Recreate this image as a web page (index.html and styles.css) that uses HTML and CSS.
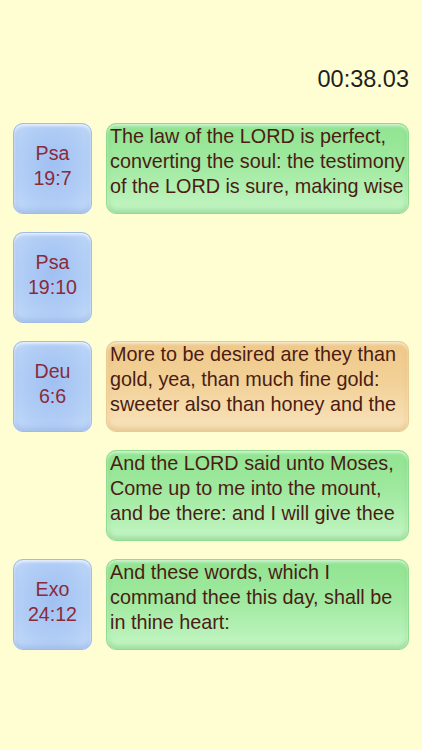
FILE: index.html
```html
<!DOCTYPE html>
<html lang="en">
<head>
    <meta charset="UTF-8">
    <meta name="viewport" content="width=device-width, initial-scale=1.0">
    <title>Memory Verses</title>
    <link rel="stylesheet" href="styles.css">
</head>
<body>
    <div class="casovac">00:38.03</div>
    <div class="seznam">
        <div class="radek">
            <div class="odkaz">Psa<br>19:7</div>
            <div class="vers zeleny">The law of the LORD is perfect, converting the soul: the testimony of the LORD is sure, making wise</div>
        </div>
        <div class="radek">
            <div class="odkaz">Psa<br>19:10</div>
        </div>
        <div class="radek">
            <div class="odkaz">Deu<br>6:6</div>
            <div class="vers oranzovy">More to be desired are they than gold, yea, than much fine gold: sweeter also than honey and the</div>
        </div>
        <div class="radek">
            <div class="odkaz prazdny"></div>
            <div class="vers zeleny">And the LORD said unto Moses, Come up to me into the mount, and be there: and I will give thee</div>
        </div>
        <div class="radek">
            <div class="odkaz">Exo<br>24:12</div>
            <div class="vers zeleny">And these words, which I command thee this day, shall be in thine heart:</div>
        </div>
    </div>
</body>
</html>
```

FILE: styles.css
```css
body {
    margin: 0;
    background-color: #fefed2;
    font-family: "Liberation Sans", Arial, sans-serif;
}

.casovac {
    text-align: right;
    font-size: 23.5px;
    color: #1e1e1e;
    padding: 66px 13px 0 0;
    height: 57px;
}

.seznam {
    display: flex;
    flex-direction: column;
    gap: 18px;
    padding-left: 13px;
}

.radek {
    display: flex;
    gap: 14px;
    height: 91px;
}

.odkaz {
    width: 79px;
    flex: none;
    box-sizing: border-box;
    padding-top: 17px;
    text-align: center;
    font-size: 19.6px;
    line-height: 25px;
    color: #8a2a3a;
    border: 1px solid #9fbbe6;
    border-radius: 10px;
    background: radial-gradient(ellipse at 50% 45%, #a0c0f2 0%, #b2cef6 60%, #c4dbf9 100%);
    box-shadow: inset 0 2px 3px rgba(255, 255, 255, 0.7), inset 0 -3px 5px rgba(120, 150, 210, 0.35);
}

.odkaz.prazdny {
    visibility: hidden;
}

.vers {
    width: 303px;
    flex: none;
    box-sizing: border-box;
    padding: 0 0 0 3px;
    font-size: 19.8px;
    line-height: 25px;
    color: #4a1c14;
    border-radius: 10px;
    overflow: hidden;
}

.zeleny {
    border: 1px solid #8fdc8f;
    background: linear-gradient(180deg, #90e490 0%, #a0e9a0 45%, #b6f1b6 80%, #c6f6c6 100%);
    box-shadow: inset 0 2px 3px rgba(255, 255, 255, 0.6), inset 0 -3px 5px rgba(80, 170, 80, 0.35);
}

.oranzovy {
    border: 1px solid #ecc98c;
    background: linear-gradient(180deg, #efc888 0%, #f2d198 45%, #f6dcae 80%, #f8e4bc 100%);
    box-shadow: inset 0 2px 3px rgba(255, 255, 255, 0.6), inset 0 -3px 5px rgba(200, 150, 70, 0.35);
}
```
